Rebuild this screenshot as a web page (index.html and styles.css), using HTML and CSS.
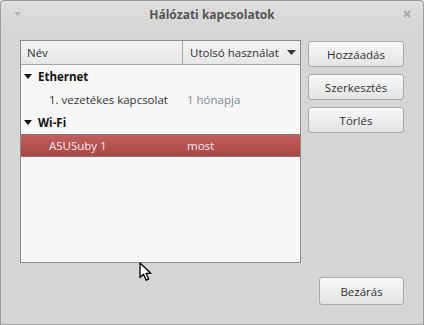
FILE: index.html
```html
<!DOCTYPE html>
<html lang="hu">
<head>
    <meta charset="UTF-8">
    <meta name="viewport" content="width=device-width, initial-scale=1.0">
    <title>Hálózati kapcsolatok</title>
    <link rel="stylesheet" href="styles.css">
</head>
<body>

    <div class="window">
        <!-- Title bar -->
        <div class="titlebar">
            <svg class="menu-arrow" width="7" height="4" viewBox="0 0 7 4"><path d="M0 0 H7 L3.5 4 Z" fill="#b4b4b4"/></svg>
            <span class="title">Hálózati kapcsolatok</span>
            <svg class="close" width="8" height="8" viewBox="0 0 8 8"><path d="M1 1 L7 7 M7 1 L1 7" stroke="#a8a8a8" stroke-width="2"/></svg>
        </div>

        <div class="content">
            <div class="main">
                <!-- Connection list -->
                <div class="list">
                    <div class="list-head">
                        <div class="col-name">Név</div>
                        <div class="col-used">
                            Utolsó használat
                            <svg width="9" height="5" viewBox="0 0 9 5"><path d="M0 0 H9 L4.5 5 Z" fill="#333"/></svg>
                        </div>
                    </div>
                    <div class="row group">
                        <svg class="expander" width="8" height="5" viewBox="0 0 8 5"><path d="M0 0 H8 L4 5 Z" fill="#111"/></svg>
                        Ethernet
                    </div>
                    <div class="row">
                        <span class="name">1. vezetékes kapcsolat</span>
                        <span class="used">1 hónapja</span>
                    </div>
                    <div class="row group">
                        <svg class="expander" width="8" height="5" viewBox="0 0 8 5"><path d="M0 0 H8 L4 5 Z" fill="#111"/></svg>
                        Wi-Fi
                    </div>
                    <div class="row selected">
                        <span class="name">ASUSuby 1</span>
                        <span class="used">most</span>
                    </div>
                </div>

                <!-- Side buttons -->
                <div class="side-buttons">
                    <button class="btn">Hozzáadás</button>
                    <button class="btn">Szerkesztés</button>
                    <button class="btn">Törlés</button>
                </div>
            </div>

            <div class="footer">
                <button class="btn btn-close">Bezárás</button>
            </div>
        </div>

        <svg class="cursor" width="14" height="20" viewBox="0 0 14 20">
            <path d="M1 1 L1 15.5 L4.5 12.2 L7.2 18.2 L9.6 17.1 L7 11.3 L11.8 11.3 Z" fill="#fff" stroke="#000" stroke-width="1.3" stroke-linejoin="round"/>
        </svg>
    </div>

</body>
</html>
```

FILE: styles.css
```css
body {
    margin: 0;
    font-family: "Open Sans", "Noto Sans", sans-serif;
    font-size: 11.5px;
    color: #333;
    background: #d6d6d6;
}
.window {
    position: relative;
    width: 424px;
    height: 325px;
    box-sizing: border-box;
    border: 1px solid #9c9c9c;
    border-radius: 4px 4px 0 0;
    background: #d6d6d6;
    display: flex;
    flex-direction: column;
}
.titlebar {
    height: 26px;
    display: flex;
    align-items: center;
    padding: 0 12px 1px 13px;
    border-radius: 4px 4px 0 0;
    background: linear-gradient(#dedede, #d6d6d6);
}
.title {
    flex: 1;
    text-align: center;
    font-size: 12px;
    font-weight: bold;
    color: #555;
}
.content {
    flex: 1;
    display: flex;
    flex-direction: column;
    padding: 12px 19px 19px 19px;
}
.main {
    display: flex;
    gap: 7px;
}
.list {
    width: 281px;
    height: 223px;
    box-sizing: border-box;
    border: 1px solid #8c8c8c;
    background: #f7f7f7;
}
.list-head {
    display: flex;
    height: 24px;
    box-sizing: border-box;
    border-bottom: 1px solid #a6a6a6;
    background: linear-gradient(#f4f4f4, #e6e6e6);
    white-space: nowrap;
}
.col-name {
    width: 162px;
    box-sizing: border-box;
    padding-left: 6px;
    border-right: 1px solid #a6a6a6;
    display: flex;
    align-items: center;
}
.col-used {
    flex: 1;
    padding-left: 7px;
    display: flex;
    align-items: center;
    gap: 8px;
}
.row {
    height: 23px;
    display: flex;
    align-items: center;
    box-sizing: border-box;
    white-space: nowrap;
}
.group {
    font-weight: bold;
    color: #111;
    padding-left: 3px;
}
.expander {
    margin-right: 6px;
}
.name {
    width: 138px;
    padding-left: 28px;
}
.used {
    color: #7b8592;
}
.selected {
    background: linear-gradient(#c25e5e, #a94848);
    border-top: 1px solid #8e7070;
    border-bottom: 1px solid #8e7070;
    color: #f6eaea;
}
.selected .used {
    color: #f6eaea;
}
.side-buttons {
    display: flex;
    flex-direction: column;
    gap: 7px;
    margin-top: 1px;
}
.btn {
    width: 96px;
    height: 26px;
    font-family: inherit;
    font-size: 11.5px;
    color: #333;
    border: 1px solid #a9a9a9;
    border-radius: 3px;
    background: linear-gradient(#f8f8f8, #e3e3e3);
    padding: 0;
}
.footer {
    margin-top: auto;
    display: flex;
    justify-content: flex-end;
}
.btn-close {
    width: 85px;
    height: 28px;
}
.cursor {
    position: absolute;
    left: 138px;
    top: 261px;
}
```
